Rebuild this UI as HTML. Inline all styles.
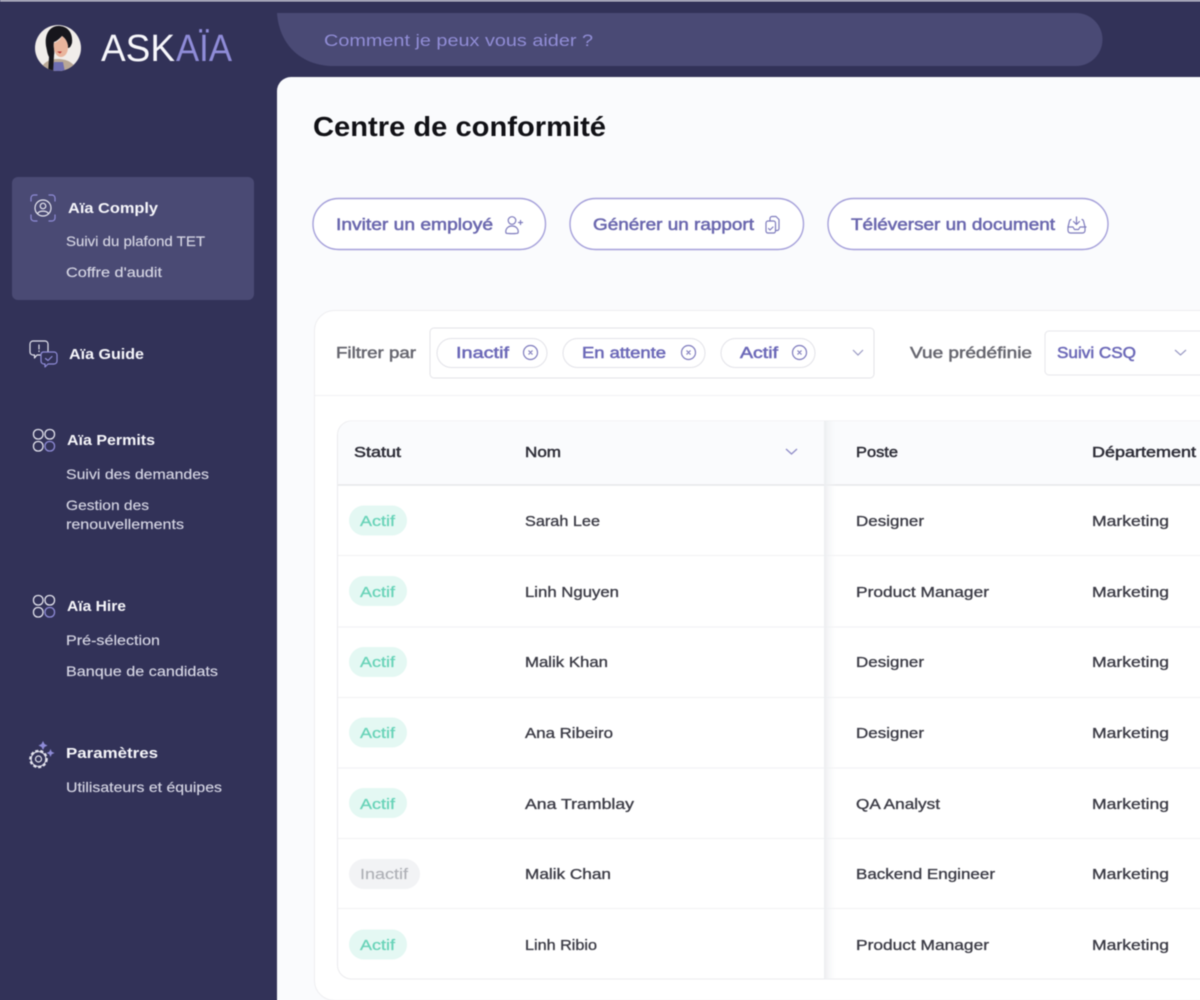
<!DOCTYPE html>
<html lang="fr"><head><meta charset="utf-8"><title>AskAïa</title>
<style>
html,body{margin:0;padding:0;background:#323258;width:1200px;height:1000px;overflow:hidden}
svg{display:block;filter:blur(.45px)}
text{font-family:"Liberation Sans",sans-serif;white-space:pre}
.h{font-weight:700;font-size:15px;fill:#f6f6fa}
.s{font-size:14px;fill:#d6d6e4;stroke:#d6d6e4;stroke-width:.15}
.b{font-size:17px;fill:#6a67ae;stroke:#6a67ae;stroke-width:.55}
.g{font-size:16px;fill:#66666f;stroke:#66666f;stroke-width:.5}
.c{font-size:16px;fill:#6c69b8;stroke:#6c69b8;stroke-width:.55}
.t{font-size:15px;fill:#2e2e38;stroke:#2e2e38;stroke-width:.5}
.d{font-size:15px;fill:#3c3c46;stroke:#3c3c46;stroke-width:.35}
.a{font-size:15px;fill:#68d3b8;stroke:#68d3b8;stroke-width:.3}
.i{font-size:15px;fill:#aeb0b6;stroke:#aeb0b6;stroke-width:.15}
</style></head><body>
<svg width="1220" height="1020" viewBox="0 0 1220 1020" xmlns="http://www.w3.org/2000/svg">
<defs><linearGradient id="fz" x1="0" x2="1" y1="0" y2="0"><stop offset="0" stop-color="#eceef0"/><stop offset="1" stop-color="#f6f7f9" stop-opacity="0"/></linearGradient></defs>
<rect width="1220" height="1020" fill="#323258"/>
<rect width="1220" height="1.500" fill="#c9c9d6"/>
<!-- search -->
<path d="M277 13H1076a26.500 26.500 0 0 1 0 53H330C298 64 279 42 277 13Z" fill="#4a4a75"/>
<text x="324" y="46" font-size="17" fill="#918dd6" textLength="269" lengthAdjust="spacingAndGlyphs">Comment je peux vous aider ?</text>
<!-- logo -->
<circle cx="58" cy="48" r="23" fill="#f1edea"/>
<clipPath id="av"><circle cx="58" cy="48" r="23"/></clipPath>
<g clip-path="url(#av)">
<path d="M40 72C42 62 50 59 58 59s16 3 20 13Z" fill="#b9a896"/>
<path d="M54 62h9l2 10H52Z" fill="#6d6db0"/>
<path d="M46 46C44 32 52 25 60 26c9 1 13 8 12 17-1 3-2 5-4 5 0-6-3-10-6-12-3 3-5 5-8 6-1 5 1 9 0 13l-1 19h-5l1-17c-2-4-2-7-3-11Z" fill="#17161c"/>
<path d="M54 43c3-1 6-3 8-7 3 2 6 6 6 11 0 6-3 10-7 10s-8-5-7-14Z" fill="#e9b59d"/>
<path d="M57 51.500h5l-2 2Z" fill="#b5312f"/>
</g>
<text x="101" y="61" font-size="38" fill="#f7f7fb" textLength="74" lengthAdjust="spacingAndGlyphs">ASK</text>
<text x="176" y="61" font-size="38" fill="#8f8cd8" textLength="56" lengthAdjust="spacingAndGlyphs">AÏA</text>
<!-- active nav -->
<rect x="12" y="177" width="242" height="123" rx="6" fill="#4a4a74"/>
<g fill="none" stroke-linecap="round" stroke-width="1.200">
<path d="M31 201v-3a3 3 0 0 1 3-3h3M49 195h3a3 3 0 0 1 3 3v3M55 215v3a3 3 0 0 1-3 3h-3M37 221h-3a3 3 0 0 1-3-3v-3" stroke="#8f8cd8"/>
<circle cx="43" cy="208" r="8" stroke="#e6e6f0"/><circle cx="43" cy="206" r="2.800" stroke="#e6e6f0"/>
<path d="M38 213c2-2.500 8-2.500 10 0" stroke="#e6e6f0"/>
</g>
<text class="h" x="68" y="213" textLength="90" lengthAdjust="spacingAndGlyphs">Aïa Comply</text>
<text class="s" x="66" y="246" textLength="139" lengthAdjust="spacingAndGlyphs">Suivi du plafond TET</text>
<text class="s" x="66" y="277" textLength="96" lengthAdjust="spacingAndGlyphs">Coffre d'audit</text>
<!-- guide -->
<g fill="none" stroke-width="1.200" stroke-linejoin="round" stroke-linecap="round">
<path d="M33 341h12a3 3 0 0 1 3 3v8a3 3 0 0 1-3 3h-8l-2.500 3v-3H33a3 3 0 0 1-3-3v-8a3 3 0 0 1 3-3Z" stroke="#e4e4ee"/>
<path d="M39 345v4M39 351v.5" stroke="#e4e4ee"/>
<path d="M43 352h11a3 3 0 0 1 3 3v6a3 3 0 0 1-3 3h-6l-3 3v-3h-1a3 3 0 0 1-3-3v-6a3 3 0 0 1 2-3Z" stroke="#8f8cd8" fill="#323258"/>
<path d="M45.500 358.500l2.500 2 4-4" stroke="#8f8cd8"/>
</g>
<text class="h" x="69" y="359" textLength="75" lengthAdjust="spacingAndGlyphs">Aïa Guide</text>
<!-- permits -->
<g fill="none" stroke-width="1.300">
<rect x="33.500" y="429.500" width="9.500" height="9.500" rx="4.300" stroke="#e4e4ee"/><rect x="45" y="429.500" width="9.500" height="9.500" rx="4.300" stroke="#e4e4ee"/>
<rect x="33.500" y="441.500" width="9.500" height="9.500" rx="4.300" stroke="#e4e4ee"/><rect x="45" y="441.500" width="9.500" height="9.500" rx="4.300" stroke="#8f8cd8"/>
<rect x="33.500" y="595.500" width="9.500" height="9.500" rx="4.300" stroke="#e4e4ee"/><rect x="45" y="595.500" width="9.500" height="9.500" rx="4.300" stroke="#e4e4ee"/>
<rect x="33.500" y="607.500" width="9.500" height="9.500" rx="4.300" stroke="#e4e4ee"/><rect x="45" y="607.500" width="9.500" height="9.500" rx="4.300" stroke="#8f8cd8"/>
</g>
<text class="h" x="67" y="445" textLength="88" lengthAdjust="spacingAndGlyphs">Aïa Permits</text>
<text class="s" x="66" y="479" textLength="143" lengthAdjust="spacingAndGlyphs">Suivi des demandes</text>
<text class="s" x="66" y="510" textLength="83" lengthAdjust="spacingAndGlyphs">Gestion des</text>
<text class="s" x="66" y="529" textLength="118" lengthAdjust="spacingAndGlyphs">renouvellements</text>
<text class="h" x="67" y="611" textLength="59" lengthAdjust="spacingAndGlyphs">Aïa Hire</text>
<text class="s" x="66" y="645" textLength="94" lengthAdjust="spacingAndGlyphs">Pré-sélection</text>
<text class="s" x="66" y="676" textLength="152" lengthAdjust="spacingAndGlyphs">Banque de candidats</text>
<!-- settings -->
<g fill="none" stroke="#e4e4ee">
<circle cx="38.500" cy="759" r="8" stroke-width="2.600" stroke-dasharray="3 1.900"/>
<circle cx="38.500" cy="759" r="7.400" stroke-width="1.100"/>
<circle cx="38.500" cy="759" r="3" stroke-width="1.200"/>
</g>
<path d="M43 741l1.500 3 3 1.500-3 1.500-1.500 3-1.500-3-3-1.500 3-1.500ZM50.500 749l1.200 2.800 2.800 1.200-2.800 1.200-1.200 2.800-1.200-2.800-2.800-1.200 2.800-1.200Z" fill="#8f8cd8"/>
<text class="h" x="66" y="758" textLength="92" lengthAdjust="spacingAndGlyphs">Paramètres</text>
<text class="s" x="66" y="792" textLength="156" lengthAdjust="spacingAndGlyphs">Utilisateurs et équipes</text>
<!-- main -->
<path d="M291 77H1220V1020H277V91a14 14 0 0 1 14-14Z" fill="#fafbfd"/>
<text x="313" y="136" font-size="28" font-weight="700" fill="#111116" textLength="293" lengthAdjust="spacingAndGlyphs">Centre de conformité</text>
<!-- buttons -->
<g fill="#fff" stroke="#a5a0da" stroke-width="1.400">
<rect x="313" y="198.500" width="232.500" height="51" rx="25.500"/>
<rect x="570" y="198.500" width="233.500" height="51" rx="25.500"/>
<rect x="828" y="198.500" width="280" height="51" rx="25.500"/>
</g>
<text class="b" x="336" y="230" textLength="157" lengthAdjust="spacingAndGlyphs">Inviter un employé</text>
<text class="b" x="593" y="230" textLength="161" lengthAdjust="spacingAndGlyphs">Générer un rapport</text>
<text class="b" x="851" y="230" textLength="204" lengthAdjust="spacingAndGlyphs">Téléverser un document</text>
<g fill="none" stroke="#7e7bbd" stroke-width="1.200" stroke-linecap="round" stroke-linejoin="round">
<circle cx="512" cy="220.500" r="3.800"/><path d="M506 233c-1-4 2-7 6-7s7 3 6 7c-.5.800-11.500.800-12 0ZM518.500 222.500h4M520.500 220.500v4"/>
<rect x="766" y="221" width="9.500" height="12" rx="2"/><path d="M770 221v-2.500a2 2 0 0 1 2-2h4l3 3v9a2 2 0 0 1-2 2h-1.500M768.500 228.500l1.500 1.500 3-3"/>
<path d="M1071 219.500a2 2 0 0 0-1.500 1.500l-1.500 6v3.500a2.500 2.500 0 0 0 2.500 2.500h12a2.500 2.500 0 0 0 2.500-2.500V227l-1.500-6a2 2 0 0 0-1.500-1.500M1068 227h5l1.500 2.500h4l1.500-2.500h6M1076.500 217v7.500M1073.500 221.500l3 3 3-3"/>
</g>
<!-- card -->
<rect x="314.500" y="310.500" width="930" height="690" rx="20" fill="#fff" stroke="#eeeef1"/>
<path d="M315 395.500H1220" stroke="#f1f1f4"/>
<text class="g" x="336" y="358" textLength="80" lengthAdjust="spacingAndGlyphs">Filtrer par</text>
<rect x="430" y="328" width="444" height="50" rx="4" fill="#fff" stroke="#e4e4e8"/>
<g fill="#fff" stroke="#e2e2e8">
<rect x="437" y="338.500" width="110" height="29" rx="14.500"/><rect x="563" y="338.500" width="142" height="29" rx="14.500"/><rect x="721" y="338.500" width="94" height="29" rx="14.500"/>
</g>
<text class="c" x="456" y="358" textLength="53" lengthAdjust="spacingAndGlyphs">Inactif</text>
<text class="c" x="582" y="358" textLength="84" lengthAdjust="spacingAndGlyphs">En attente</text>
<text class="c" x="740" y="358" textLength="38" lengthAdjust="spacingAndGlyphs">Actif</text>
<text class="g" x="910" y="358" textLength="122" lengthAdjust="spacingAndGlyphs">Vue prédéfinie</text>
<rect x="1045" y="331" width="185" height="44" rx="4" fill="#fff" stroke="#e6e6ea"/>
<text class="c" x="1057" y="358" textLength="79" lengthAdjust="spacingAndGlyphs">Suivi CSQ</text>
<g fill="none" stroke="#7e7bbd" stroke-width="1.200">
<circle cx="530.500" cy="352.500" r="7"/><circle cx="688.500" cy="352.500" r="7"/><circle cx="799.500" cy="352.500" r="7"/>
<path d="M528.500 350.500l4 4M532.500 350.500l-4 4M686.500 350.500l4 4M690.500 350.500l-4 4M797.500 350.500l4 4M801.500 350.500l-4 4"/>
<path d="M853 350l5 5 5-5M1175 350l5.500 5 5.500-5" stroke="#9a9ac4"/>
</g>
<!-- table -->
<rect x="337.500" y="421" width="900" height="558" rx="14" fill="#fff" stroke="#ebebee"/>
<path d="M338 485V435a14 14 0 0 1 14-14H1220V485Z" fill="#fafbfd"/>
<path d="M338 485H1220" stroke="#e2e3e6" stroke-width="1.300"/>
<path d="M338 555.500H1220M338 627H1220M338 697.500H1220M338 768H1220M338 838.500H1220M338 908.500H1220" stroke="#f1f1f3"/>
<rect x="824" y="421" width="12" height="558" fill="url(#fz)"/>
<text class="t" x="354" y="457" textLength="47" lengthAdjust="spacingAndGlyphs">Statut</text>
<text class="t" x="525" y="457" textLength="36" lengthAdjust="spacingAndGlyphs">Nom</text>
<text class="t" x="856" y="457" textLength="42" lengthAdjust="spacingAndGlyphs">Poste</text>
<text class="t" x="1092" y="457" textLength="104" lengthAdjust="spacingAndGlyphs">Département</text>
<path d="M786 449l5.500 5 5.500-5" fill="none" stroke="#8f8cc8" stroke-width="1.300"/>
<!-- badges -->
<g fill="#e4f8f3">
<rect x="349" y="505.500" width="58" height="30" rx="15"/><rect x="349" y="576" width="58" height="30" rx="15"/><rect x="349" y="647" width="58" height="30" rx="15"/><rect x="349" y="717.500" width="58" height="30" rx="15"/><rect x="349" y="788" width="58" height="30" rx="15"/><rect x="349" y="929.500" width="58" height="30" rx="15"/>
</g>
<rect x="349" y="859" width="71" height="30" rx="15" fill="#f2f3f5"/>
<text class="a" x="360" y="526" textLength="35" lengthAdjust="spacingAndGlyphs">Actif</text>
<text class="a" x="360" y="597" textLength="35" lengthAdjust="spacingAndGlyphs">Actif</text>
<text class="a" x="360" y="667" textLength="35" lengthAdjust="spacingAndGlyphs">Actif</text>
<text class="a" x="360" y="738" textLength="35" lengthAdjust="spacingAndGlyphs">Actif</text>
<text class="a" x="360" y="809" textLength="35" lengthAdjust="spacingAndGlyphs">Actif</text>
<text class="i" x="360" y="879" textLength="48" lengthAdjust="spacingAndGlyphs">Inactif</text>
<text class="a" x="360" y="950" textLength="35" lengthAdjust="spacingAndGlyphs">Actif</text>
<!-- names -->
<text class="d" x="525" y="526" textLength="75" lengthAdjust="spacingAndGlyphs">Sarah Lee</text>
<text class="d" x="525" y="597" textLength="94" lengthAdjust="spacingAndGlyphs">Linh Nguyen</text>
<text class="d" x="525" y="667" textLength="83" lengthAdjust="spacingAndGlyphs">Malik Khan</text>
<text class="d" x="525" y="738" textLength="88" lengthAdjust="spacingAndGlyphs">Ana Ribeiro</text>
<text class="d" x="525" y="809" textLength="109" lengthAdjust="spacingAndGlyphs">Ana Tramblay</text>
<text class="d" x="525" y="879" textLength="86" lengthAdjust="spacingAndGlyphs">Malik Chan</text>
<text class="d" x="525" y="950" textLength="72" lengthAdjust="spacingAndGlyphs">Linh Ribio</text>
<!-- poste -->
<text class="d" x="856" y="526" textLength="68" lengthAdjust="spacingAndGlyphs">Designer</text>
<text class="d" x="856" y="597" textLength="133" lengthAdjust="spacingAndGlyphs">Product Manager</text>
<text class="d" x="856" y="667" textLength="68" lengthAdjust="spacingAndGlyphs">Designer</text>
<text class="d" x="856" y="738" textLength="68" lengthAdjust="spacingAndGlyphs">Designer</text>
<text class="d" x="856" y="809" textLength="84" lengthAdjust="spacingAndGlyphs">QA Analyst</text>
<text class="d" x="856" y="879" textLength="139" lengthAdjust="spacingAndGlyphs">Backend Engineer</text>
<text class="d" x="856" y="950" textLength="133" lengthAdjust="spacingAndGlyphs">Product Manager</text>
<!-- dept -->
<text class="d" x="1092" y="526" textLength="77" lengthAdjust="spacingAndGlyphs">Marketing</text>
<text class="d" x="1092" y="597" textLength="77" lengthAdjust="spacingAndGlyphs">Marketing</text>
<text class="d" x="1092" y="667" textLength="77" lengthAdjust="spacingAndGlyphs">Marketing</text>
<text class="d" x="1092" y="738" textLength="77" lengthAdjust="spacingAndGlyphs">Marketing</text>
<text class="d" x="1092" y="809" textLength="77" lengthAdjust="spacingAndGlyphs">Marketing</text>
<text class="d" x="1092" y="879" textLength="77" lengthAdjust="spacingAndGlyphs">Marketing</text>
<text class="d" x="1092" y="950" textLength="77" lengthAdjust="spacingAndGlyphs">Marketing</text>
</svg>
</body></html>
